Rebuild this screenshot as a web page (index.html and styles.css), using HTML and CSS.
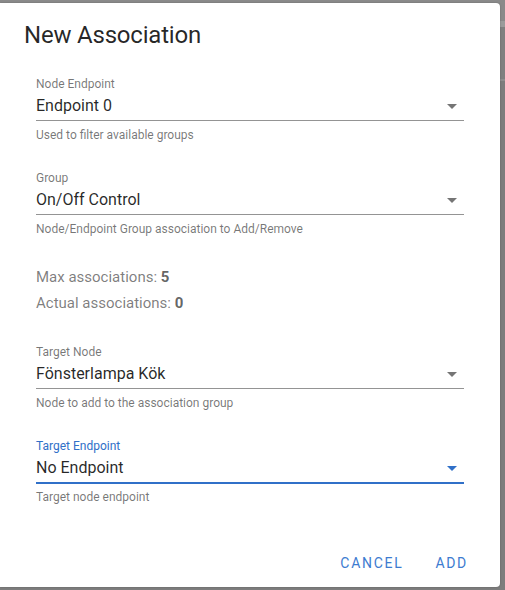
FILE: index.html
```html
<!DOCTYPE html>
<html lang="sv">
<head>
<meta charset="utf-8">
<title>New Association</title>
<link rel="stylesheet" href="styles.css">
</head>
<body>
<div class="dialog">
  <div class="title">New Association</div>
  <div class="content">
    <div class="field">
      <div class="label">Node Endpoint</div>
      <div class="control">
        <span class="value">Endpoint 0</span>
        <svg class="arrow" viewBox="0 0 24 24" width="24" height="24"><path d="M7 10l5 5 5-5z"/></svg>
      </div>
      <div class="hint">Used to filter available groups</div>
    </div>
    <div class="field">
      <div class="label">Group</div>
      <div class="control">
        <span class="value">On/Off Control</span>
        <svg class="arrow" viewBox="0 0 24 24" width="24" height="24"><path d="M7 10l5 5 5-5z"/></svg>
      </div>
      <div class="hint">Node/Endpoint Group association to Add/Remove</div>
    </div>
    <div class="stats">
      <div class="stat">Max associations: <b>5</b></div>
      <div class="stat">Actual associations: <b>0</b></div>
    </div>
    <div class="field">
      <div class="label">Target Node</div>
      <div class="control">
        <span class="value">Fönsterlampa Kök</span>
        <svg class="arrow" viewBox="0 0 24 24" width="24" height="24"><path d="M7 10l5 5 5-5z"/></svg>
      </div>
      <div class="hint">Node to add to the association group</div>
    </div>
    <div class="field focused">
      <div class="label">Target Endpoint</div>
      <div class="control">
        <span class="value">No Endpoint</span>
        <svg class="arrow" viewBox="0 0 24 24" width="24" height="24"><path d="M7 10l5 5 5-5z"/></svg>
      </div>
      <div class="hint">Target node endpoint</div>
    </div>
  </div>
  <div class="actions">
    <button class="btn">Cancel</button>
    <button class="btn">Add</button>
  </div>
</div>
</body>
</html>
```

FILE: styles.css
```css
html, body {
  margin: 0;
  padding: 0;
}

body {
  width: 505px;
  height: 590px;
  overflow: hidden;
  box-sizing: border-box;
  padding-top: 3px;
  font-family: Roboto, "Liberation Sans", Arial, sans-serif;
  background:
    linear-gradient(to bottom,
      #8a8a8a 0, #8a8a8a 21px,
      #9b9b9b 21px, #9b9b9b 27px,
      #808080 27px, #808080 79px,
      #8e8e8e 79px, #8e8e8e 81px,
      #7d7d7d 81px);
}

.dialog {
  width: 500px;
  height: 584px;
  box-sizing: border-box;
  background: #ffffff;
  border-radius: 0 4px 4px 0;
  display: flex;
  flex-direction: column;
  box-shadow: 0 0 2px rgba(0, 0, 0, 0.25);
}

.title {
  padding: 16px 24px 0 24px;
  font-size: 24px;
  line-height: 32px;
  font-weight: 400;
  letter-spacing: -0.2px;
  color: rgba(0, 0, 0, 0.85);
}

.content {
  padding: 25px 36px 0 36px;
}

.field {
  margin-bottom: 28px;
}

.label {
  font-size: 12px;
  line-height: 16px;
  height: 16px;
  color: rgba(0, 0, 0, 0.54);
}

.control {
  display: flex;
  align-items: center;
  height: 28px;
  border-bottom: 1px solid rgba(0, 0, 0, 0.42);
}

.value {
  flex: 1;
  font-size: 16px;
  line-height: 28px;
  color: rgba(0, 0, 0, 0.85);
  white-space: nowrap;
}

.arrow {
  flex: none;
  fill: rgba(0, 0, 0, 0.54);
}

.hint {
  margin-top: 7px;
  font-size: 12px;
  line-height: 14px;
  color: rgba(0, 0, 0, 0.54);
}

.focused .label {
  color: #3070c8;
}

.focused .control {
  border-bottom: 2px solid #3070c8;
}

.focused .arrow {
  fill: #3070c8;
}

.focused .hint {
  margin-top: 6px;
}

.stats {
  margin-bottom: 28px;
}

.stat {
  font-size: 15px;
  line-height: 26px;
  color: rgba(0, 0, 0, 0.52);
}

.stat b {
  font-weight: 700;
  color: rgba(0, 0, 0, 0.62);
}

.actions {
  margin-top: auto;
  display: flex;
  justify-content: flex-end;
  padding: 0 16px 6px 0;
}

.btn {
  height: 36px;
  min-width: 64px;
  padding: 0 16px;
  border: none;
  background: transparent;
  font-family: Roboto, "Liberation Sans", Arial, sans-serif;
  font-size: 14px;
  font-weight: 400;
  letter-spacing: 1.7px;
  text-transform: uppercase;
  color: #3d7bd0;
  cursor: pointer;
}
```
